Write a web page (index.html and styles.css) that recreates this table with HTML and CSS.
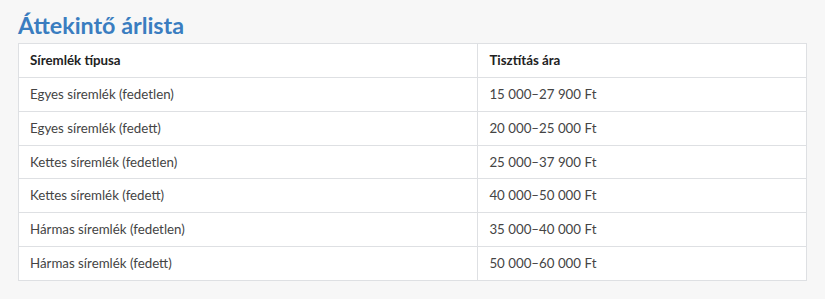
FILE: index.html
```html
<!DOCTYPE html>
<html lang="hu">
<head>
<meta charset="utf-8">
<link rel="stylesheet" href="styles.css">
</head>
<body>
<main class="page">
  <h2 class="title">Áttekintő árlista</h2>
  <table class="prices">
    <thead>
      <tr><th class="col-type">Síremlék típusa</th><th>Tisztítás ára</th></tr>
    </thead>
    <tbody>
      <tr><td>Egyes síremlék (fedetlen)</td><td>15 000–27 900 Ft</td></tr>
      <tr><td>Egyes síremlék (fedett)</td><td>20 000–25 000 Ft</td></tr>
      <tr><td>Kettes síremlék (fedetlen)</td><td>25 000–37 900 Ft</td></tr>
      <tr><td>Kettes síremlék (fedett)</td><td>40 000–50 000 Ft</td></tr>
      <tr><td>Hármas síremlék (fedetlen)</td><td>35 000–40 000 Ft</td></tr>
      <tr><td>Hármas síremlék (fedett)</td><td>50 000–60 000 Ft</td></tr>
    </tbody>
  </table>
</main>
</body>
</html>
```
FILE: styles.css
```css
html, body {
  margin: 0;
  padding: 0;
  background: #f7f7f7;
}
body {
  font-family: "Lato", "Open Sans", sans-serif;
  color: #444;
}
.page {
  padding: 12px 18px 18px;
}
.title {
  margin: 0 0 4px;
  font-size: 23.3px;
  line-height: 27px;
  font-weight: 700;
  color: #3a7dc0;
}
.prices {
  width: 100%;
  border-collapse: collapse;
  background: #fff;
  font-size: 13.3px;
}
.prices th, .prices td {
  border: 1px solid #dee0e3;
  padding: 7px 11px;
  line-height: 18.85px;
  text-align: left;
}
.prices th {
  font-weight: 700;
  color: #222;
}
.col-type {
  width: 58.3%;
}
```
